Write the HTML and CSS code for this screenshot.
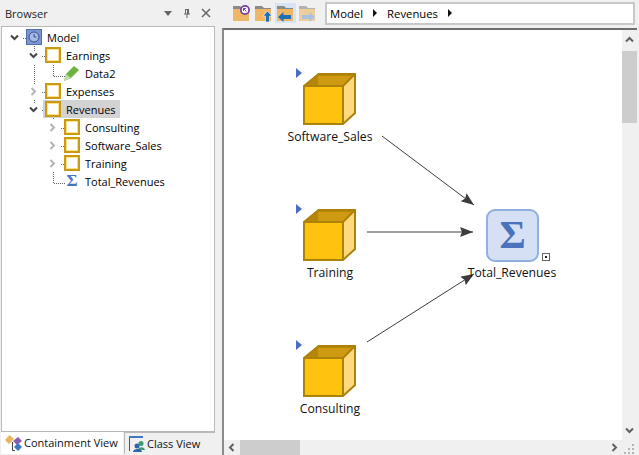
FILE: index.html
```html
<!DOCTYPE html>
<html lang="en">
<head>
<meta charset="utf-8">
<title>Browser - Revenues</title>
<link rel="stylesheet" href="styles.css">
</head>
<body>
<svg class="defs" width="0" height="0" aria-hidden="true">
  <defs>
    <symbol id="box" viewBox="0 0 16 16">
      <rect x="1" y="1" width="14" height="14" fill="#fff" stroke="#c99a14" stroke-width="2"/>
      <rect x="2.500" y="2.500" width="11" height="11" fill="#fff" stroke="#ffdf8a" stroke-width="1"/>
    </symbol>
    <symbol id="open" viewBox="0 0 9 9">
      <path d="M1 2.500 4.500 6 8 2.500" fill="none" stroke="#444" stroke-width="2"/>
    </symbol>
    <symbol id="closed" viewBox="0 0 9 9">
      <path d="M2.500 1 6 4.500 2.500 8" fill="none" stroke="#b4b4b4" stroke-width="2"/>
    </symbol>
    <symbol id="cube" viewBox="0 0 53 52">
      <path d="M15.500 1H52V40L40 51V13Z" fill="#ffd97f"/>
      <path d="M1 13 15.500 1H52L40 13Z" fill="#b58608"/>
      <path d="M15 3H49L40 12H15Z" fill="#cd9a12"/>
      <path d="M1 13H40V51H1Z" fill="#ffc20e"/>
      <path d="M1 13 15.500 1H52V40L40 51H1ZM1 13H40V51M40 13 52 1" fill="none" stroke="#ad8208" stroke-width="2"/>
    </symbol>
    <symbol id="folder" viewBox="0 0 16 16">
      <path d="M0 0H7L9 2H16V4H0Z" fill="#8a8a8a"/>
      <path d="M0 3H16V15H0Z" fill="#eeb765"/>
    </symbol>
  </defs>
</svg>

<div class="app">
  <aside class="browser">
    <header class="browser-head">
      <span class="browser-title">Browser</span>
      <span class="head-tools">
        <svg class="tool" viewBox="0 0 10 10"><path d="M1 3H9L5 8Z" fill="#666"/></svg>
        <svg class="tool" viewBox="0 0 10 10"><path d="M3 1H7V5.500H8V6.500H5.500V10H4.500V6.500H2V5.500H3ZM4 2V5.500H5V2Z" fill="#666" fill-rule="evenodd"/></svg>
        <svg class="tool" viewBox="0 0 10 10"><path d="M1 1 9 9M9 1 1 9" stroke="#666" stroke-width="1.500"/></svg>
      </span>
    </header>

    <div class="tree-box">
      <svg class="tree-lines" viewBox="0 27 214 170" width="214" height="170">
        <path d="M23 38.500H26M34.500 46V51M34.500 65V84M34.500 100V103M42 56.500H45M42 92.500H45M42 110.500H45M53.500 65V76.500H65M53.500 118V120M53.500 172V183.500H65M61 128.500H64M61 146.500H64M61 164.500H64" fill="none" stroke="#666" stroke-dasharray="1 1"/>
      </svg>
      <ul class="tree">
        <li class="row lvl0">
          <svg class="chev"><use href="#open"/></svg>
          <svg class="icon" viewBox="0 0 16 16">
            <rect x=".5" y=".5" width="15" height="15" fill="#7d96cf" stroke="#4e6cb0"/>
            <circle cx="8" cy="8" r="5" fill="#a9bbe2" stroke="#33518f"/>
            <path d="M8 5V8H10.500" fill="none" stroke="#33518f"/>
          </svg>
          <span class="name">Model</span>
        </li>
        <li class="row lvl1">
          <svg class="chev"><use href="#open"/></svg>
          <svg class="icon"><use href="#box"/></svg>
          <span class="name">Earnings</span>
        </li>
        <li class="row lvl2">
          <span class="chev"></span>
          <svg class="icon" viewBox="0 0 16 16">
            <path d="M0 16 2 9 10 1 15 5 7 13Z" fill="#6cb33f"/>
            <path d="M0 16 2 9 7 13Z" fill="#bcdca6"/>
          </svg>
          <span class="name">Data2</span>
        </li>
        <li class="row lvl1">
          <svg class="chev"><use href="#closed"/></svg>
          <svg class="icon"><use href="#box"/></svg>
          <span class="name">Expenses</span>
        </li>
        <li class="row lvl1">
          <svg class="chev"><use href="#open"/></svg>
          <span class="selected">
            <svg class="icon"><use href="#box"/></svg>
            <span class="name">Revenues</span>
          </span>
        </li>
        <li class="row lvl2">
          <svg class="chev"><use href="#closed"/></svg>
          <svg class="icon"><use href="#box"/></svg>
          <span class="name">Consulting</span>
        </li>
        <li class="row lvl2">
          <svg class="chev"><use href="#closed"/></svg>
          <svg class="icon"><use href="#box"/></svg>
          <span class="name">Software_Sales</span>
        </li>
        <li class="row lvl2">
          <svg class="chev"><use href="#closed"/></svg>
          <svg class="icon"><use href="#box"/></svg>
          <span class="name">Training</span>
        </li>
        <li class="row lvl2">
          <span class="chev"></span>
          <span class="icon sigma-small">Σ</span>
          <span class="name">Total_Revenues</span>
        </li>
      </ul>
    </div>

    <nav class="tabs">
      <div class="tab tab-active">
        <svg class="tab-icon" viewBox="0 0 18 16">
          <path d="M0 5 4.500 0 9 4 4 9Z" fill="#e8b45e"/>
          <path d="M8 6 13 2 17 6 12 10Z" fill="#8a5cb0"/>
          <path d="M9 12 13 8 17 12 13 16Z" fill="#3f78c0"/>
          <path d="M7.500 7V15.500H10" fill="none" stroke="#444"/>
        </svg>
        <span>Containment View</span>
      </div>
      <div class="tab tab-class">
        <svg class="tab-icon" viewBox="0 0 18 16">
          <path d="M0 0H14V2H0Z" fill="#3f78c0"/>
          <path d="M.5 2V15" stroke="#555"/>
          <circle cx="12" cy="7.500" r="2.500" fill="#3f9b6a"/>
          <path d="M9 14C9 11 15 10 16 14Z" fill="#3f9b6a"/>
          <circle cx="8" cy="10" r="2.500" fill="#2d64ad"/>
          <path d="M4 16C4 12 13 12 13 16Z" fill="#2d64ad"/>
        </svg>
        <span>Class View</span>
      </div>
    </nav>
  </aside>

  <main class="editor">
    <div class="toolbar">
      <div class="tool-group">
        <span class="tool-btn">
          <svg class="folder-icon" viewBox="0 0 17 17">
            <use href="#folder" width="16" height="16" y="1"/>
            <circle cx="12" cy="5" r="5" fill="#7a3fa8"/>
            <circle cx="12" cy="5" r="3.200" fill="#fff"/>
            <path d="M10.500 3.500 13.500 6.500M10.500 3.500H13M10.500 3.500V6" stroke="#7a3fa8" fill="none"/>
          </svg>
        </span>
        <span class="tool-btn">
          <svg class="folder-icon" viewBox="0 0 17 17">
            <use href="#folder" width="16" height="16" y="1"/>
            <path d="M12.500 6 17 11H14.500V17H10.500V11H8Z" fill="#1f6fb8" stroke="#fff" stroke-width=".6"/>
          </svg>
        </span>
        <span class="tool-btn tool-btn-on">
          <svg class="folder-icon" viewBox="0 0 17 17">
            <use href="#folder" width="16" height="16" y="1"/>
            <path d="M1 12 6.500 7V10H14V14H6.500V17Z" fill="#1f6fb8"/>
          </svg>
        </span>
        <span class="tool-btn tool-btn-off">
          <svg class="folder-icon" viewBox="0 0 17 17">
            <use href="#folder" width="16" height="16" y="1"/>
            <path d="M16 12 10.500 7V10H3V14H10.500V17Z" fill="#7ba6d4"/>
          </svg>
        </span>
      </div>
      <div class="path-bar">
        <span>Model</span><i class="crumb"></i><span>Revenues</span><i class="crumb"></i>
      </div>
    </div>

    <section class="canvas-frame">
      <div class="canvas-row">
        <div class="canvas">
          <svg class="wires" width="399" height="409" viewBox="223 30 399 409">
            <defs>
              <marker id="head" markerWidth="14" markerHeight="12" refX="13" refY="5" orient="auto" markerUnits="userSpaceOnUse">
                <path d="M0 0 13 5 0 10 2 5Z" fill="#3c3c3c"/>
              </marker>
            </defs>
            <path d="M382 136 474 205" class="wire" marker-end="url(#head)"/>
            <path d="M367 232H473" class="wire" marker-end="url(#head)"/>
            <path d="M367 342 474 274" class="wire" marker-end="url(#head)"/>
          </svg>

          <div class="node node-sw">
            <i class="marker"></i>
            <svg class="cube"><use href="#cube"/></svg>
            <span class="node-label">Software_Sales</span>
          </div>
          <div class="node node-tr">
            <i class="marker"></i>
            <svg class="cube"><use href="#cube"/></svg>
            <span class="node-label">Training</span>
          </div>
          <div class="node node-co">
            <i class="marker"></i>
            <svg class="cube"><use href="#cube"/></svg>
            <span class="node-label">Consulting</span>
          </div>
          <div class="sum-node">
            <div class="sum-box">Σ</div>
            <i class="sum-badge"></i>
            <span class="node-label">Total_Revenues</span>
          </div>
        </div>
        <div class="vscroll">
          <svg class="arrow" viewBox="0 0 9 9"><path d="M1 6.500 4.500 3 8 6.500" fill="none" stroke="#606060" stroke-width="2"/></svg>
          <div class="vthumb"></div>
          <svg class="arrow arrow-end" viewBox="0 0 9 9"><path d="M1 2.500 4.500 6 8 2.500" fill="none" stroke="#606060" stroke-width="2"/></svg>
        </div>
      </div>
      <div class="hscroll">
        <svg class="arrow" viewBox="0 0 9 9"><path d="M6.500 1 3 4.500 6.500 8" fill="none" stroke="#606060" stroke-width="2"/></svg>
        <div class="hthumb"></div>
        <svg class="arrow arrow-end" viewBox="0 0 9 9"><path d="M2.500 1 6 4.500 2.500 8" fill="none" stroke="#606060" stroke-width="2"/></svg>
        <svg class="grip" viewBox="0 0 11 10"><path d="M8 0h2v2H8zM4 4h2v2H4zM8 4h2v2H8zM0 8h2v2H0zM4 8h2v2H4zM8 8h2v2H8z" fill="#b4b4b4"/></svg>
      </div>
    </section>
  </main>
</div>
</body>
</html>
```
FILE: styles.css
```css
* { box-sizing: border-box; }
html, body { margin: 0; height: 100%; }
body {
  background: #f0f0f0;
  color: #000;
  font-family: "Open Sans", "Noto Sans", sans-serif;
  font-size: 11px;
  overflow: hidden;
}
.defs { position: absolute; }
.app { display: flex; width: 639px; height: 455px; }

.browser { width: 215px; display: flex; flex-direction: column; padding-left: 1px; flex: none; }
.browser-head { height: 26px; display: flex; align-items: center; justify-content: space-between; padding: 0 4px; }
.browser-title { font-size: 11px; color: #222; }
.head-tools { display: flex; gap: 9px; }
.tool { width: 10px; height: 10px; display: block; }

.tree-box { position: relative; flex: 1; background: #fff; border: 1px solid #b9b9b9; padding-top: 1px; }
.tree-lines { position: absolute; left: -2px; top: 0; }
.tree { list-style: none; margin: 0; padding: 0; position: relative; }
.row { height: 18px; display: flex; align-items: center; white-space: nowrap; }
.lvl0 { padding-left: 8px; }
.lvl1 { padding-left: 27px; }
.lvl2 { padding-left: 46px; }
.chev { width: 9px; height: 9px; flex: none; margin-right: 7px; display: block; }
.icon { width: 16px; height: 16px; flex: none; display: block; }
.name { margin-left: 5px; }
.selected { display: flex; align-items: center; background: #d3d3d3; height: 18px; margin-left: -2px; padding: 0 4px 0 2px; }
.sigma-small { font-family: "Liberation Serif", serif; font-weight: 700; font-size: 17px; line-height: 16px; color: #4a72bd; text-align: center; }

.tabs { display: flex; height: 23px; align-items: flex-start; }
.tab { display: flex; align-items: center; gap: 1px; height: 22px; padding: 0 3px 0 4px; color: #111; }
.tab + .tab { border-top: 1px solid #b9b9b9; border-left: 1px solid #b9b9b9; margin-left: 1px; flex: 1; }
.tab-active { background: #fff; height: 23px; width: 122px; margin-top: -1px; }
.tab-class { gap: 0; }
.tab-icon { width: 18px; height: 16px; flex: none; }

.editor { flex: 1; display: flex; flex-direction: column; padding-left: 7px; padding-right: 2px; min-width: 0; }
.toolbar { height: 28px; display: flex; align-items: center; padding: 0 2px 2px 9px; }
.tool-group { display: flex; gap: 1px; width: 94px; flex: none; }
.tool-btn { width: 21px; height: 20px; display: flex; align-items: center; justify-content: center; }
.tool-btn-on { background: #d6e4f3; }
.tool-btn-off { opacity: .6; }
.folder-icon { width: 17px; height: 17px; }
.path-bar { flex: 1; height: 23px; display: flex; align-items: center; gap: 10px; background: #fff; border: 2px solid #c8c8c8; padding-left: 3px; font-size: 11.300px; }
.crumb { width: 0; height: 0; border-left: 4px solid #111; border-top: 4px solid transparent; border-bottom: 4px solid transparent; }

.canvas-frame { flex: 1; display: flex; flex-direction: column; border-top: 2px solid #6e6e6e; border-left: 2px solid #8c8c8c; min-height: 0; }
.canvas-row { flex: 1; display: flex; min-height: 0; }
.canvas { position: relative; flex: 1; background: #fff; overflow: hidden; }
.wires { position: absolute; left: -1px; top: 0; }
.wire { fill: none; stroke: #3c3c3c; stroke-width: 1; }

.node { position: absolute; width: 120px; height: 84px; }
.node-sw { left: 46px; top: 36px; }
.node-tr { left: 46px; top: 172px; }
.node-co { left: 46px; top: 308px; }
.marker { position: absolute; left: 26px; top: 2px; width: 0; height: 0; border-left: 6px solid #4a6fc0; border-top: 5px solid transparent; border-bottom: 5px solid transparent; }
.cube { position: absolute; left: 33px; top: 7px; width: 53px; height: 52px; }
.node-label { position: absolute; left: 0; right: 0; bottom: 5px; text-align: center; color: #111; font-size: 12.200px; line-height: 16px; }

.sum-node { position: absolute; left: 227px; top: 177px; width: 122px; height: 74px; }
.sum-box { position: absolute; left: 35px; top: 2px; width: 53px; height: 53px; background: #d5e0f5; border: 2px solid #90b0e0; border-radius: 9px; font-family: "Liberation Serif", serif; font-weight: 700; font-size: 40px; line-height: 47px; text-align: center; color: #4a72bd; }
.sum-badge { position: absolute; left: 91px; top: 46px; width: 8px; height: 8px; border: 1px solid #666; background: radial-gradient(circle, #222 0 1px, #fff 1.500px); }
.sum-node .node-label { bottom: 0; }

.vscroll { width: 15px; flex: none; display: flex; flex-direction: column; background: #f0f0f0; }
.vthumb { width: 15px; height: 72px; background: #cdcdcd; margin-top: 2px; }
.arrow { width: 9px; height: 9px; flex: none; display: block; margin: 5px 3px; }
.arrow-end { margin-top: auto; }
.hscroll { height: 15px; flex: none; display: flex; align-items: center; background: #f0f0f0; position: relative; }
.hthumb { width: 60px; height: 15px; background: #cdcdcd; margin-left: 1px; }
.hscroll .arrow { margin: 0 3px; }
.hscroll .arrow-end { margin-left: auto; margin-right: 18px; }
.grip { position: absolute; right: 2px; bottom: 1px; width: 11px; height: 10px; }
```
